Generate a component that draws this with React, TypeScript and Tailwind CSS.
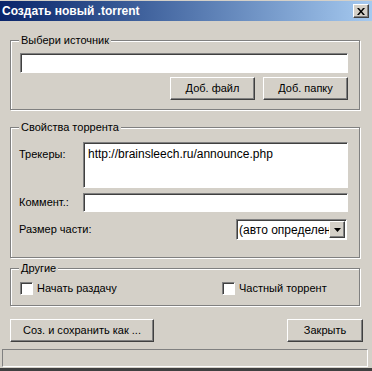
import React from 'react';

const raised =
  'border border-t-white border-l-white border-r-[#404040] border-b-[#404040] shadow-[inset_-1px_-1px_0_#808080] bg-[#D4D0C8]';
const sunken =
  'border border-t-[#808080] border-l-[#808080] border-r-white border-b-white shadow-[inset_1px_1px_0_#404040] bg-white';
const etched = 'border border-[#808080] shadow-[1px_1px_0_#fff,inset_1px_1px_0_#fff]';

function Group({ title, className, children }: { title: string; className: string; children: React.ReactNode }) {
  return (
    <div className={'relative ' + etched + ' ' + className}>
      <span className="absolute -top-[8px] left-[8px] bg-[#D4D0C8] px-[2px] leading-[14px]">{title}</span>
      {children}
    </div>
  );
}

function Check({ label }: { label: string }) {
  return (
    <div className="flex items-center gap-[4px]">
      <div className={sunken + ' w-[13px] h-[13px]'} />
      <span>{label}</span>
    </div>
  );
}

export default function App() {
  return (
    <div className="w-[372px] h-[371px] bg-[#D4D0C8] flex flex-col text-[11px] text-black font-['Liberation_Sans',Arial,sans-serif] overflow-hidden">
      {/* Title bar */}
      <div className="mt-[1px] h-[20px] flex items-center justify-between pl-[2px] pr-[3px] bg-gradient-to-r from-[#0A246A] to-[#A6CAF0]">
        <span className="text-white font-bold text-[12px]">Создать новый .torrent</span>
        <div className={raised + ' w-[16px] h-[14px] flex items-center justify-center'}>
          <svg width="8" height="7" viewBox="0 0 8 7">
            <path d="M0 0h2l2 2.5L6 0h2L5 3.5 8 7H6L4 4.5 2 7H0l3-3.5z" fill="#000" />
          </svg>
        </div>
      </div>

      <div className="flex flex-col px-[10px]">
        {/* Source */}
        <Group title="Выбери источник" className="mt-[19px] h-[70px] w-[350px] flex flex-col pl-[9px] pr-[11px]">
          <div className={sunken + ' mt-[12px] h-[20px]'} />
          <div className="mt-[4px] flex justify-end gap-[8px]">
            <button className={raised + ' w-[85px] h-[23px]'}>Доб. файл</button>
            <button className={raised + ' w-[85px] h-[23px]'}>Доб. папку</button>
          </div>
        </Group>

        {/* Properties */}
        <Group title="Свойства торрента" className="mt-[17px] h-[131px] w-[350px] flex flex-col pl-[8px] pr-[11px]">
          <div className="mt-[14px] flex">
            <span className="w-[64px] pt-[4px]">Трекеры:</span>
            <div className={sunken + ' flex-1 h-[46px] pl-[4px] pt-[2px] text-[12px]'}>http://brainsleech.ru/announce.php</div>
          </div>
          <div className="mt-[5px] flex items-center">
            <span className="w-[64px]">Коммент.:</span>
            <div className={sunken + ' flex-1 h-[19px]'} />
          </div>
          <div className="mt-[7px] flex items-center justify-between pr-[1px]">
            <span>Размер части:</span>
            <div className={sunken + ' w-[111px] h-[21px] flex items-center overflow-hidden'}>
              <span className="flex-1 pl-[2px] whitespace-nowrap overflow-hidden text-[12px]">(авто определение)</span>
              <div className={raised + ' w-[16px] h-[17px] mr-[1px] flex items-center justify-center shrink-0'}>
                <svg width="7" height="4" viewBox="0 0 7 4">
                  <path d="M0 0h7L3.5 4z" fill="#000" />
                </svg>
              </div>
            </div>
          </div>
        </Group>

        {/* Other */}
        <Group title="Другие" className="mt-[10px] h-[38px] w-[350px] flex items-center pl-[9px]">
          <div className="mt-[2px] flex w-full">
            <div className="w-[202px]">
              <Check label="Начать раздачу" />
            </div>
            <Check label="Частный торрент" />
          </div>
        </Group>

        {/* Buttons */}
        <div className="mt-[13px] flex justify-between">
          <button className={raised + ' w-[144px] h-[23px]'}>Соз. и сохранить как ...</button>
          <button className={raised + ' w-[76px] h-[23px] mr-[-1px]'}>Закрыть</button>
        </div>
      </div>

      {/* Status bar */}
      <div className="mt-[7px] mx-[2px] w-[366px] h-[18px] border border-t-[#808080] border-l-[#808080] border-r-white border-b-white" />
      <div className="mt-auto h-[3px] bg-[#404040]" />
    </div>
  );
}
